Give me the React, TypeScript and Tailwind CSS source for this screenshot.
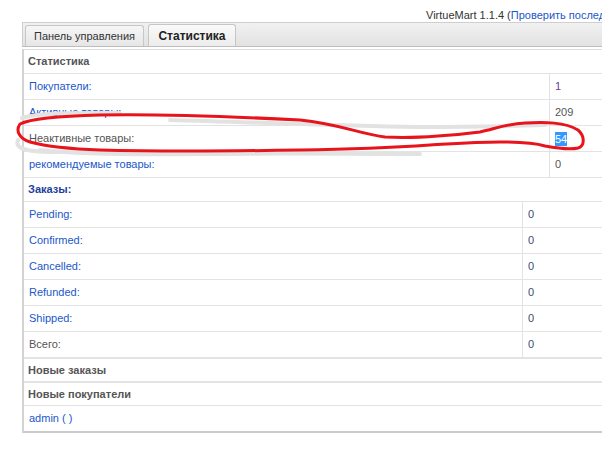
import React from "react";

const statRows = [
  { label: "Покупатели:", value: "1", link: true, valueColor: "text-[#6a3d8c]" },
  { label: "Активные товары:", value: "209", link: true, valueColor: "text-[#555]" },
  { label: "Неактивные товары:", value: "54", link: false, valueColor: "text-white", selected: true },
  { label: "рекомендуемые товары:", value: "0", link: true, valueColor: "text-[#555]" },
];

const orderRows = [
  { label: "Pending:", value: "0", link: true },
  { label: "Confirmed:", value: "0", link: true },
  { label: "Cancelled:", value: "0", link: true },
  { label: "Refunded:", value: "0", link: true },
  { label: "Shipped:", value: "0", link: true },
];

export default function App() {
  return (
    <div
      className="relative w-[602px] h-[459px] bg-white overflow-hidden text-[11px] text-[#333]"
      style={{ fontFamily: '"Liberation Sans", Arial, sans-serif' }}
    >
      {/* version line */}
      <div className="h-[22px] pl-[426px] pt-[8px] leading-[14px] whitespace-nowrap">
        VirtueMart 1.1.4 (<span className="text-[#2157c9]">Проверить последнюю версию</span>)
      </div>

      <div className="ml-[22px] w-[620px]">
        {/* tabs */}
        <div className="h-[25px] border-t border-l border-b border-t-[#cfcfcf] border-l-[#cfcfcf] border-b-[#bdbdbd] bg-gradient-to-b from-[#f1f1f1] to-[#e2e2e2] flex items-end gap-[4px] pl-[2px]">
          <div className="w-[119px] h-[21px] rounded-t-[3px] border border-b-0 border-[#c6c6c6] bg-gradient-to-b from-[#f6f6f6] to-[#e6e6e6] flex items-center justify-center text-[11px] text-[#333]">
            Панель управления
          </div>
          <div className="w-[88px] h-[22px] rounded-t-[3px] border border-b-0 border-[#c6c6c6] bg-gradient-to-b from-[#fafafa] to-[#ececec] flex items-center justify-center text-[12px] font-bold text-[#222]">
            Статистика
          </div>
        </div>

        {/* content panel */}
        <div className="mt-[2px] border-t border-t-[#dedede] border-l-2 border-l-[#d4d4d4] border-b-2 border-b-[#cacaca]">
          <div className="h-[24px] pl-[4px] flex items-center font-bold text-[#555] border-b border-[#e3e3e3]">
            Статистика
          </div>
          {statRows.map((r) => (
            <div key={r.label} className="h-[26px] flex border-b border-[#e3e3e3]">
              <div className={`w-[525px] pl-[5px] flex items-center ${r.link ? "text-[#2157c9]" : "text-[#555]"}`}>
                {r.label}
              </div>
              <div className={`flex-1 pl-[5px] flex items-center border-l border-[#e3e3e3] ${r.valueColor}`}>
                <span className={r.selected ? "bg-[#3399ff] leading-[14px]" : ""}>{r.value}</span>
              </div>
            </div>
          ))}

          <div className="h-[24px] pl-[4px] flex items-center font-bold text-[#1e3f9e] border-b border-[#e3e3e3]">
            Заказы:
          </div>
          {orderRows.map((r) => (
            <div key={r.label} className="h-[26px] flex border-b border-[#e3e3e3]">
              <div className="w-[498px] pl-[5px] flex items-center text-[#2157c9]">{r.label}</div>
              <div className="flex-1 pl-[5px] flex items-center border-l border-[#e3e3e3] text-[#3d4a6e]">
                {r.value}
              </div>
            </div>
          ))}
          <div className="h-[27px] flex border-b-2 border-[#e3e3e3]">
            <div className="w-[498px] pl-[5px] flex items-center text-[#555]">Всего:</div>
            <div className="flex-1 pl-[5px] flex items-center border-l border-[#e3e3e3] text-[#3d4a6e]">0</div>
          </div>

          <div className="h-[24px] pl-[4px] flex items-center font-bold text-[#555] border-b-2 border-[#e3e3e3]">
            Новые заказы
          </div>
          <div className="h-[23px] pl-[4px] flex items-center font-bold text-[#555] border-b border-[#e3e3e3]">
            Новые покупатели
          </div>
          <div className="h-[25px] pl-[5px] flex items-center text-[#2157c9]">admin ( )</div>
        </div>
      </div>

      {/* hand-drawn annotation */}
      <svg className="absolute left-0 top-0 pointer-events-none" width="602" height="459" viewBox="0 0 602 459">
        <path
          d="M22 118 C40 112, 80 113, 120 113 M170 120 C250 122, 330 126, 420 127 C470 127, 510 126, 545 125 M40 150 C80 154, 130 155, 200 154 C280 153, 350 154, 420 154"
          fill="none"
          stroke="#e2e2e2"
          strokeWidth="4"
          strokeLinecap="round"
        />
        <path
          d="M18 140 C14 150, 30 152, 60 152"
          fill="none"
          stroke="#e2e2e2"
          strokeWidth="4"
          strokeLinecap="round"
        />
        <path
          d="M20 124 C30 119, 60 116, 100 115 C150 114, 220 116, 300 120 C340 124, 360 134, 385 137 C420 139, 455 135, 480 132 C495 129, 505 124, 525 123 C545 122, 565 122, 578 130 C585 136, 585 146, 578 148 C570 150, 556 148, 545 146 C535 143, 525 142, 500 142 C470 142, 450 144, 430 145 C400 147, 360 149, 300 150 C240 151, 170 152, 100 150 C70 149, 45 146, 30 142 C20 139, 15 131, 20 124 Z"
          fill="none"
          stroke="#e8141c"
          strokeWidth="3"
          strokeLinejoin="round"
        />
      </svg>
    </div>
  );
}
